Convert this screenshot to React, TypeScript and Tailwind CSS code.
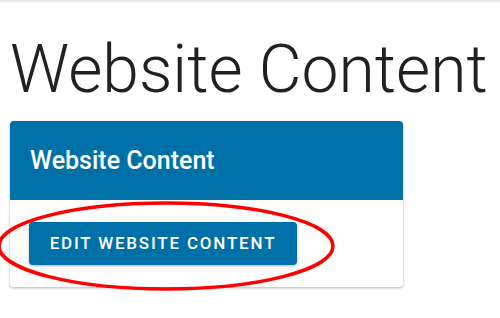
export default function App() {
  return (
    <div className="relative h-[318px] w-[500px] overflow-hidden bg-white font-['Roboto',sans-serif]">
      <div className="h-[4px] bg-gradient-to-b from-black/10 to-transparent" />
      <div className="px-[10px]">
        <h1 className="mt-[33px] text-[66px] leading-[66px] font-light text-[#212121]">Website Content</h1>
        <section className="mt-[18px] w-[393px] overflow-hidden rounded bg-white shadow-[0_1px_3px_rgba(0,0,0,0.3)]">
          <header className="bg-[#0070a8] pl-[20px] pt-[24px] pb-[23px]">
            <h2 className="text-[25px] leading-[32px] font-medium text-white">Website Content</h2>
          </header>
          <div className="px-[19px] py-[22px]">
            <button className="h-[43px] w-[268px] rounded bg-[#0070a8] text-[17px] font-medium tracking-[1.8px] text-white uppercase shadow-[0_1px_3px_rgba(0,0,0,0.3)]">
              Edit Website Content
            </button>
          </div>
        </section>
      </div>
      <svg className="pointer-events-none absolute left-0 top-0" width="500" height="318" viewBox="0 0 500 318">
        <ellipse cx="166" cy="246" rx="167" ry="43" fill="none" stroke="#ff0000" strokeWidth="3.5" />
      </svg>
    </div>
  );
}
